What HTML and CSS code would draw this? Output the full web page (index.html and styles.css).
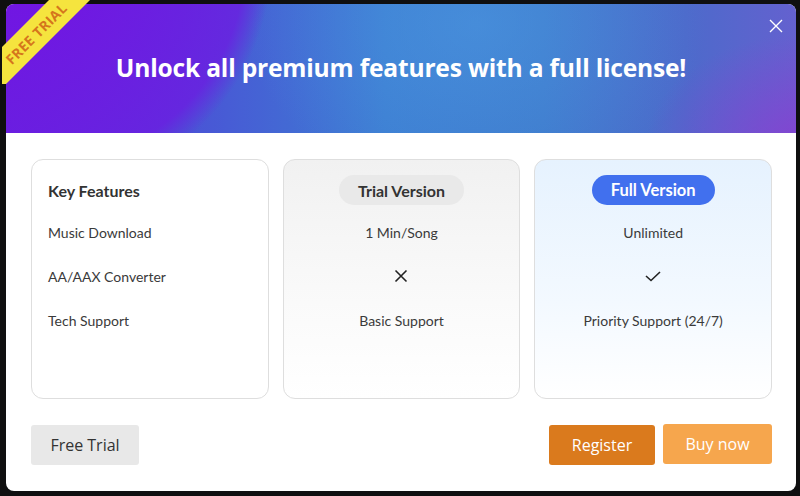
FILE: index.html
```html
<!DOCTYPE html>
<html lang="en">
<head>
<meta charset="utf-8">
<title>Unlock premium</title>
<link rel="stylesheet" href="styles.css">
</head>
<body>
<div class="dialog">
  <div class="ribbon-wrap"><div class="ribbon">FREE TRIAL</div></div>
  <header class="header">
    <h1 class="title">Unlock all premium features with a full license!</h1>
    <button class="close" aria-label="Close">
      <svg width="14" height="14" viewBox="0 0 14 14"><path d="M1 1L13 13M13 1L1 13" stroke="#fff" stroke-width="1.4" fill="none"/></svg>
    </button>
  </header>
  <main class="body">
    <div class="cards">
      <section class="card card-keys">
        <div class="head"><span class="head-plain">Key Features</span></div>
        <div class="row left">Music Download</div>
        <div class="row left">AA/AAX Converter</div>
        <div class="row left">Tech Support</div>
      </section>
      <section class="card card-trial">
        <div class="head"><span class="pill pill-grey">Trial Version</span></div>
        <div class="row">1 Min/Song</div>
        <div class="row"><svg width="14" height="14" viewBox="0 0 14 14"><path d="M1.5 1.5L12.5 12.5M12.5 1.5L1.5 12.5" stroke="#222" stroke-width="1.6" fill="none"/></svg></div>
        <div class="row">Basic Support</div>
      </section>
      <section class="card card-full">
        <div class="head"><span class="pill pill-blue">Full Version</span></div>
        <div class="row">Unlimited</div>
        <div class="row"><svg width="16" height="11" viewBox="0 0 16 11"><path d="M1 5L6 9.5L15 1" stroke="#222" stroke-width="1.6" fill="none"/></svg></div>
        <div class="row">Priority Support (24/7)</div>
      </section>
    </div>
    <div class="footer">
      <button class="btn btn-grey">Free Trial</button>
      <div class="actions">
        <button class="btn btn-register">Register</button>
        <button class="btn btn-buy">Buy now</button>
      </div>
    </div>
  </main>
</div>
</body>
</html>
```
FILE: styles.css
```css
* { box-sizing: border-box; }
html, body { margin: 0; padding: 0; }
body {
  width: 800px;
  height: 496px;
  background: #0f0f10;
  padding: 4px 4px 5px 6px;
  overflow: hidden;
}
.dialog {
  position: relative;
  width: 790px;
  height: 487px;
  background: #fff;
  border-radius: 8px;
  display: flex;
  flex-direction: column;
}
.header {
  position: relative;
  height: 129px;
  border-radius: 8px 8px 0 0;
  display: flex;
  align-items: center;
  justify-content: center;
  background:
    radial-gradient(circle at 34px -44px, rgba(118,16,228,0.9) 0, rgba(110,24,226,0.75) 205px, rgba(110,24,226,0) 232px),
    radial-gradient(ellipse 230px 170px at 470px 20px, rgba(80,160,230,0.45) 0, rgba(80,160,230,0) 100%),
    radial-gradient(ellipse 160px 110px at 800px 140px, rgba(140,60,210,0.8) 0, rgba(140,60,210,0) 100%),
    linear-gradient(90deg, #5a34da 0%, #4a52d6 22%, #3d7ed2 48%, #3f7bcd 68%, #4d6acb 86%, #6461cf 100%);
}
.title {
  margin: 0;
  margin-top: -3px;
  font-family: "Open Sans", sans-serif;
  font-weight: 700;
  font-size: 24.6px;
  color: #fff;
  letter-spacing: -0.2px;
}
.close {
  position: absolute;
  right: 13px;
  top: 15px;
  width: 14px;
  height: 14px;
  padding: 0;
  border: 0;
  background: none;
  display: flex;
}
.ribbon-wrap {
  position: absolute;
  left: -4px;
  top: -4px;
  width: 92px;
  height: 84px;
  overflow: hidden;
  z-index: 2;
}
.ribbon {
  position: absolute;
  left: -36px;
  top: 19px;
  width: 140px;
  height: 29px;
  background: #f5e43e;
  transform: rotate(-45deg);
  color: #d5761c;
  font-family: "Open Sans", sans-serif;
  font-weight: 700;
  font-size: 14px;
  line-height: 29px;
  text-align: center;
  letter-spacing: 0.4px;
}
.body {
  flex: 1;
  padding: 26px 24px 26px 25px;
  display: flex;
  flex-direction: column;
}
.cards {
  display: grid;
  grid-template-columns: repeat(3, 1fr);
  gap: 14px;
  height: 240px;
}
.card {
  border: 1px solid #dedede;
  border-radius: 12px;
  padding-top: 15px;
  font-family: Lato, sans-serif;
  font-size: 14px;
  color: #3a3a3a;
}
.card-trial { background: linear-gradient(180deg, #f1f1f1 0%, #fafafa 60%, #ffffff 100%); }
.card-full { background: linear-gradient(180deg, #e6f2fe 0%, #f3f9ff 60%, #ffffff 100%); }
.head {
  height: 30px;
  margin-bottom: 5px;
  display: flex;
  align-items: center;
  justify-content: center;
}
.card-keys .head { justify-content: flex-start; padding-left: 16px; }
.head-plain { font-weight: 700; font-size: 16px; color: #333; }
.pill {
  height: 30px;
  border-radius: 15px;
  padding: 0 18px;
  display: flex;
  align-items: center;
  font-weight: 700;
  font-size: 16px;
}
.pill-grey { background: #e9e9e9; color: #333; padding: 0 19px; }
.pill-blue { background: #4170ee; color: #fff; padding: 0 19px; font-size: 16.5px; }
.row {
  height: 44px;
  display: flex;
  align-items: center;
  justify-content: center;
}
.row.left { justify-content: flex-start; padding-left: 16px; }
.footer {
  margin-top: auto;
  display: flex;
  justify-content: space-between;
  align-items: center;
}
.actions { display: flex; gap: 8px; }
.btn {
  height: 40px;
  border: 0;
  border-radius: 3px;
  font-family: "Open Sans", sans-serif;
  font-size: 16px;
  padding: 0;
}
.btn-grey { width: 108px; background: #e8e8e8; color: #333; }
.btn-register { width: 106px; background: #da7a1d; color: #fff; }
.btn-buy { width: 109px; background: #f6a64d; color: #fff; margin-top: -1px; }
```
